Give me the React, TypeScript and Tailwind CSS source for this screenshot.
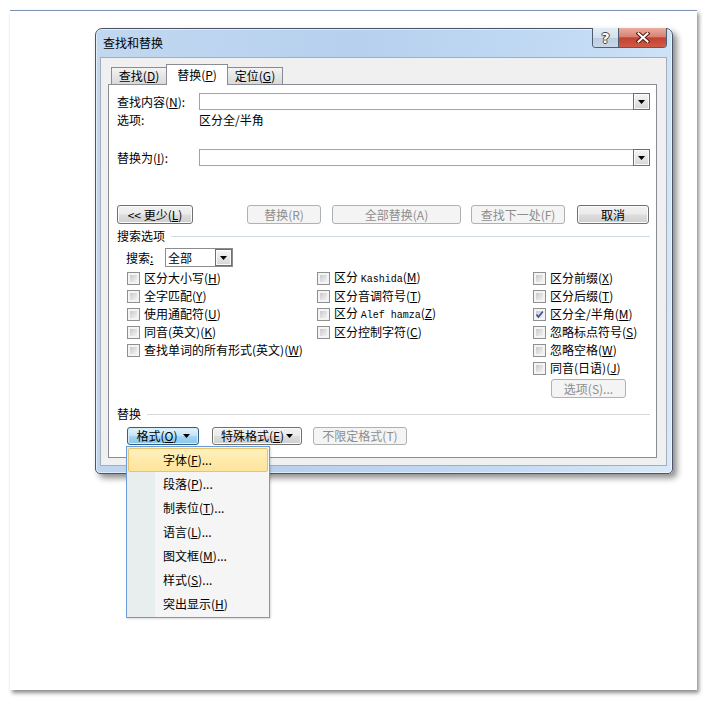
import React from "react";

const F = "font-['Noto_Sans_CJK_SC','Liberation_Sans',sans-serif]";

function M({ t, k }: { t: string; k: string }) {
  return (
    <span className="whitespace-nowrap">
      {t}(<span className="underline underline-offset-[1px]">{k}</span>)
    </span>
  );
}

function Tri({ c = "#000" }: { c?: string }) {
  return (
    <svg width="7" height="4" viewBox="0 0 7 4">
      <path d="M0 0 H7 L3.5 4 Z" fill={c} />
    </svg>
  );
}

function DropBtn({ className = "" }: { className?: string }) {
  return (
    <div
      className={`border border-[#6f6f6f] bg-[linear-gradient(to_bottom,#f6f6f6,#d6d6d6)] shadow-[inset_0_0_0_1px_#fafafa] flex items-center justify-center ${className}`}
    >
      <Tri />
    </div>
  );
}

function Combo() {
  return (
    <div className="flex-1 h-[17px] flex">
      <div className="flex-1 border border-r-0 border-[#a3a3a3] bg-white" />
      <DropBtn className="w-[17px] h-[17px]" />
    </div>
  );
}

function Btn({
  disabled,
  pressed,
  className = "",
  children,
}: {
  disabled?: boolean;
  pressed?: boolean;
  className?: string;
  children: React.ReactNode;
}) {
  const base = disabled
    ? "border-[#adb2b5] bg-[#f4f4f4] text-[#8d8d8d]"
    : pressed
    ? "border-[#2c628b] bg-[linear-gradient(to_bottom,#e5f3fb_0%,#c4e4f6_48%,#a6d5f1_52%,#8cc5ea_100%)] shadow-[inset_0_0_0_1px_#d7ecf9]"
    : "border-[#707070] bg-[linear-gradient(to_bottom,#f2f2f2_0%,#ebebeb_48%,#dddddd_52%,#cfcfcf_100%)] shadow-[inset_0_0_0_1px_#fbfbfb]";
  return (
    <div
      className={`flex items-center justify-center rounded-[3px] border whitespace-nowrap ${base} ${className}`}
    >
      {children}
    </div>
  );
}

function Check({ checked }: { checked?: boolean }) {
  return (
    <span className="w-[13px] h-[13px] border border-[#8e8f8f] bg-[#f4f4f4] p-[2px] shrink-0 flex">
      <span className="flex-1 bg-[linear-gradient(135deg,#c9c9c9,#f3f3f3)] flex items-center justify-center relative">
        {checked && (
          <svg width="11" height="11" viewBox="0 0 11 11" className="absolute left-[-2px] top-[-2px]">
            <path d="M2.5 5.5 L4.5 8 L8.8 2.5" stroke="#3552a0" strokeWidth="1.7" fill="none" />
          </svg>
        )}
      </span>
    </span>
  );
}

function CB({ children, checked }: { children: React.ReactNode; checked?: boolean }) {
  return (
    <div className="h-[18px] flex items-center gap-[4px] whitespace-nowrap">
      <Check checked={checked} />
      <span>{children}</span>
    </div>
  );
}

function Mono({ children }: { children: React.ReactNode }) {
  return <span className="font-['Liberation_Mono',monospace] text-[10px]">{children}</span>;
}

function Header({ label, line = "#d2dbe4" }: { label: string; line?: string }) {
  return (
    <div className="flex items-center h-[14px]">
      <span className="whitespace-nowrap">{label}</span>
      <div className={`flex-1 h-px ml-[6px] ${line === "gray" ? "bg-[#d8d8d8]" : "bg-[#d0dbe6]"}`} />
    </div>
  );
}

function Dialog() {
  return (
    <div className="w-[578px] h-[446px] rounded-t-[7px] rounded-b-[5px] border border-[#4a5565] bg-[linear-gradient(100deg,#c2d8f0_0%,#b6d0ee_40%,#c3dbf4_75%,#d9e9f9_100%)] shadow-[inset_0_0_0_1px_rgba(255,255,255,0.55),4px_4px_6px_rgba(0,0,0,0.45)] flex flex-col pl-[4px] pr-[5px]">
      {/* title bar */}
      <div className="h-[28px] flex items-start">
        <span className="ml-[3px] mt-[7px] whitespace-nowrap">查找和替换</span>
        <div className="ml-auto -mt-px flex h-[20px] border border-t-0 border-[#4f5d70] rounded-b-[4px] overflow-hidden">
          <div className="w-[26px] h-full bg-[linear-gradient(to_bottom,#e4ecf5_0%,#d3e0ee_50%,#bccde0_52%,#c9d8e8_100%)] flex items-center justify-center border-r border-[#4f5d70]">
            <span className="font-['DejaVu_Sans',sans-serif] font-bold text-[14px] leading-[14px] text-white [text-shadow:1px_0_#3b4655,-1px_0_#3b4655,0_1px_#3b4655,0_-1px_#3b4655]">
              ?
            </span>
          </div>
          <div className="w-[47px] h-full bg-[linear-gradient(to_bottom,#e9ada0_0%,#d98373_45%,#c24331_52%,#cf5a45_100%)] flex items-center justify-center">
            <svg width="14" height="11" viewBox="0 0 14 11">
              <path d="M2.5 1.5 L11.5 9.5 M11.5 1.5 L2.5 9.5" stroke="#5a1a12" strokeWidth="4" strokeLinecap="square" />
              <path d="M2.5 1.5 L11.5 9.5 M11.5 1.5 L2.5 9.5" stroke="#ffffff" strokeWidth="2" strokeLinecap="square" />
            </svg>
          </div>
        </div>
      </div>

      {/* client */}
      <div className="h-[409px] border border-[#a3adbb] bg-[#f0f0f0] pl-[7px]">
        {/* tabs */}
        <div className="mt-[6px] h-[20px] flex items-end ml-[3px]">
          <div className="w-[56px] h-[17px] border border-b-0 border-[#898c95] bg-[linear-gradient(to_bottom,#f3f3f3,#d9d9d9)] flex items-center justify-center">
            <M t="查找" k="D" />
          </div>
          <div className="w-[62px] h-[21px] -mb-px -ml-px border border-b-0 border-[#898c95] bg-white relative z-10 flex items-center justify-center">
            <M t="替换" k="P" />
          </div>
          <div className="w-[56px] h-[17px] -ml-px border border-b-0 border-[#898c95] bg-[linear-gradient(to_bottom,#f3f3f3,#d9d9d9)] flex items-center justify-center">
            <M t="定位" k="G" />
          </div>
        </div>

        {/* panel */}
        <div className="w-[549px] h-[374px] border border-[#898c95] bg-white pl-[8px] pr-[6px] flex flex-col">
          <div className="mt-[8px] h-[17px] flex items-center">
            <span className="w-[82px] whitespace-nowrap">
              查找内容(<span className="underline underline-offset-[1px]">N</span>):
            </span>
            <Combo />
          </div>
          <div className="mt-[3px] h-[14px] flex items-center">
            <span className="w-[82px]">选项:</span>
            <span>区分全/半角</span>
          </div>
          <div className="mt-[22px] h-[17px] flex items-center">
            <span className="w-[82px] whitespace-nowrap">
              替换为(<span className="underline underline-offset-[1px]">I</span>):
            </span>
            <Combo />
          </div>

          <div className="mt-[39px] h-[19px] flex">
            <Btn className="w-[76px] h-[19px]">
              &lt;&lt; 更少(<span className="underline underline-offset-[1px]">L</span>)
            </Btn>
            <Btn disabled className="w-[74px] h-[19px] ml-[54px]">替换(R)</Btn>
            <Btn disabled className="w-[129px] h-[19px] ml-[11px]">全部替换(A)</Btn>
            <Btn disabled className="w-[94px] h-[19px] ml-[10px]">查找下一处(F)</Btn>
            <Btn className="w-[72px] h-[19px] ml-[12px]">取消</Btn>
          </div>

          <div className="mt-[5px]">
            <Header label="搜索选项" />
          </div>

          <div className="mt-[5px] h-[19px] flex items-center pl-[9px]">
            <span className="w-[39px] whitespace-nowrap">
              搜索<span className="underline underline-offset-[1px]">:</span>
            </span>
            <div className="w-[68px] h-[19px] flex border border-[#8c8c8c] bg-white">
              <span className="flex-1 pl-[2px] flex items-center">全部</span>
              <DropBtn className="w-[17px] h-full" />
            </div>
          </div>

          <div className="mt-[2px] flex pl-[10px]">
            <div className="w-[190px] flex flex-col">
              <CB><M t="区分大小写" k="H" /></CB>
              <CB><M t="全字匹配" k="Y" /></CB>
              <CB><M t="使用通配符" k="U" /></CB>
              <CB><M t="同音(英文)" k="K" /></CB>
              <CB><M t="查找单词的所有形式(英文)" k="W" /></CB>
            </div>
            <div className="w-[216px] flex flex-col">
              <CB>
                区分 <Mono>Kashida</Mono>(<span className="underline underline-offset-[1px]">M</span>)
              </CB>
              <CB><M t="区分音调符号" k="T" /></CB>
              <CB>
                区分 <Mono>Alef hamza</Mono>(<span className="underline underline-offset-[1px]">Z</span>)
              </CB>
              <CB><M t="区分控制字符" k="C" /></CB>
            </div>
            <div className="flex flex-col">
              <CB><M t="区分前缀" k="X" /></CB>
              <CB><M t="区分后缀" k="T" /></CB>
              <CB checked><M t="区分全/半角" k="M" /></CB>
              <CB><M t="忽略标点符号" k="S" /></CB>
              <CB><M t="忽略空格" k="W" /></CB>
              <CB><M t="同音(日语)" k="J" /></CB>
              <Btn disabled className="w-[75px] h-[19px] ml-[18px] mt-[2px]">选项(S)...</Btn>
            </div>
          </div>

          <div className="mt-[9px]">
            <Header label="替换" line="gray" />
          </div>

          <div className="mt-[6px] h-[18px] flex pl-[10px]">
            <Btn pressed className="w-[72px] h-[18px] gap-[5px]">
              <M t="格式" k="O" />
              <Tri />
            </Btn>
            <Btn className="w-[90px] h-[18px] ml-[13px] gap-[2px]">
              <M t="特殊格式" k="E" />
              <Tri />
            </Btn>
            <Btn disabled className="w-[94px] h-[18px] ml-[11px]">不限定格式(T)</Btn>
          </div>
        </div>
      </div>
    </div>
  );
}

function Menu() {
  const items: [string, string, string][] = [
    ["字体", "F", "..."],
    ["段落", "P", "..."],
    ["制表位", "T", "..."],
    ["语言", "L", "..."],
    ["图文框", "M", "..."],
    ["样式", "S", "..."],
    ["突出显示", "H", ""],
  ];
  return (
    <div className="absolute left-[126px] top-[446px] w-[144px] border border-[#6b9bd6] p-px bg-[linear-gradient(to_right,#e8eded_0px,#e8eded_28px,#f5f5f5_28px)] shadow-[1px_1px_2px_rgba(0,0,0,0.15)]">
      {items.map(([t, k, s], i) => (
        <div
          key={t}
          className={`h-[24px] flex items-center pl-[34px] rounded-[2px] border ${
            i === 0
              ? "border-[#e8c26c] bg-[linear-gradient(to_bottom,#fff0bd,#fde49a)]"
              : "border-transparent"
          }`}
        >
          <span className="whitespace-nowrap">
            {t}(<span className="underline underline-offset-[1px]">{k}</span>){s}
          </span>
        </div>
      ))}
    </div>
  );
}

export default function App() {
  return (
    <div
      className={`relative w-[708px] h-[701px] bg-white ${F} text-[12px] leading-[14px] text-black pt-[10px] pl-[10px]`}
    >
      <div className="w-[687px] h-[680px] bg-white border-t border-[#7f93b1] shadow-[2px_3px_4px_rgba(0,0,0,0.45)] pt-[17px] pl-[85px]">
        <Dialog />
      </div>
      <Menu />
    </div>
  );
}
